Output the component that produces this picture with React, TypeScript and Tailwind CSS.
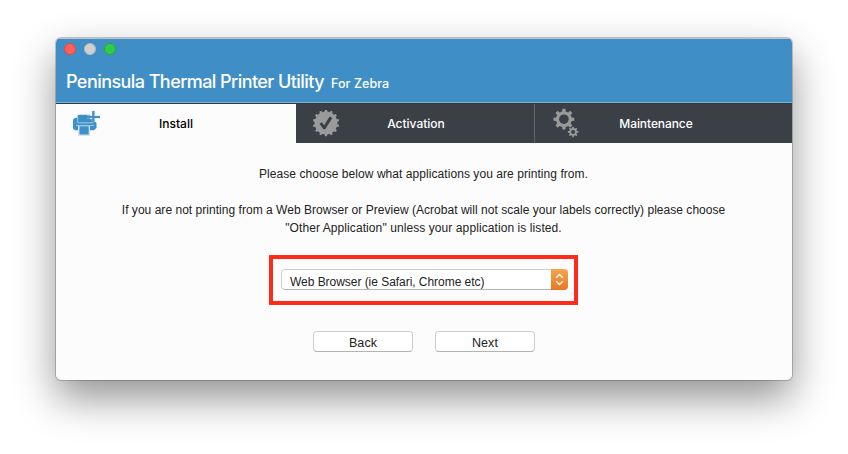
import React from 'react';

const PrinterIcon = () => (
  <svg className="block" width="28" height="28" viewBox="0 0 28 28">
    <path d="M5.500 5.500L7 4.700H18V9H21V12H23.500L24.500 13V18L22 20.300H3L1 18.500V9.500L3 8L5.500 7.500Z" fill="#3f90c8" />
    <path d="M5.700 6V12.800H21.500M4 15.500H22" fill="none" stroke="#b5d6eb" strokeWidth="0.800" />
    <path d="M6 16H18V26H6Z" fill="#cfe3f1" />
    <path d="M7.500 16.200H16.700V24.500H7.500Z" fill="#3f90c8" />
    <path d="M15 5H28V8.800H15ZM19.500 0.500H23.500V12H19.500Z" fill="#cfe3f1" opacity="0.450" />
    <path d="M15 6H28V8H15ZM20.200 1H22.500V12H20.200Z" fill="#3f90c8" />
  </svg>
);

const teeth = (cx: number, cy: number, count: number, inner: number, outer: number, spread: number) =>
  Array.from({ length: count }, (_, i) => {
    const step = (Math.PI * 2) / count;
    const a = i * step - Math.PI / 2;
    return [
      [inner, -spread * 1.5],
      [outer, -spread],
      [outer, spread],
      [inner, spread * 1.5],
    ]
      .map(([r, d]) => `${(cx + r * Math.cos(a + step * d)).toFixed(2)},${(cy + r * Math.sin(a + step * d)).toFixed(2)}`)
      .join(' ');
  }).join(' ');

const BadgeIcon = () => (
  <svg className="block" width="28" height="28" viewBox="0 0 28 28">
    <polygon points={teeth(14, 13, 14, 11.5, 13.2, 0.17)} fill="#9a9a9a" />
    <path d="M7.500 13.800L9.800 12.300L12.200 15.200L17.600 6.500L20.300 7.900L13.200 19.300H11.400Z" fill="#3b4047" />
  </svg>
);

const GearsIcon = () => (
  <svg className="block overflow-visible" width="28" height="30" viewBox="0 0 28 30">
    <polygon points={teeth(12.9, 9.2, 8, 8, 10.5, 0.19)} fill="#999" />
    <circle cx="12.900" cy="9.200" r="4.800" fill="#3b4047" />
    <polygon points={teeth(22.1, 21.9, 8, 3.9, 5.3, 0.19)} fill="#999" />
    <circle cx="22.100" cy="21.900" r="2" fill="#3b4047" />
  </svg>
);

const Tab = ({ icon, label, className }: { icon: React.ReactNode; label: string; className: string }) => (
  <div className={`relative flex h-full items-center justify-center text-[12px] font-medium ${className}`}>
    <span className="absolute left-4 top-[6px]">{icon}</span>
    <span className="pt-px">{label}</span>
  </div>
);

const Button = ({ children }: { children: React.ReactNode }) => (
  <button className="flex h-[21px] w-[100px] items-center justify-center rounded-[4px] border border-[#cfcfcf] border-b-[#b3b3b3] bg-white pt-[4px] text-[12.500px] leading-none tracking-[0.100px]">
    {children}
  </button>
);

export default function App() {
  return (
    <div className="h-[454px] w-[848px] overflow-hidden bg-white px-[56px] pt-[38px] font-['Liberation_Sans',Arial,sans-serif] text-[#222]">
      <div className="flex h-[342px] w-[736px] flex-col overflow-hidden rounded-[5px] bg-[#fcfcfc] shadow-[0_0_0_1px_rgba(0,0,0,0.2),0_18px_40px_rgba(0,0,0,0.43)]">
        <header className="h-[65px] border-t border-b border-t-[#b5c4cf] border-b-[#75b2dc] bg-[#3f8fc6] font-['Inter',sans-serif] text-white">
          <div className="flex gap-2 pl-2 pt-1">
            <span className="size-3 rounded-full border border-[#e2463f] bg-[#ff605a]" />
            <span className="size-3 rounded-full border border-[#b9b9b9] bg-[#d0d0d0]" />
            <span className="size-3 rounded-full border border-[#1ead32] bg-[#2fcb4a]" />
          </div>
          <div className="flex items-baseline gap-[7px] whitespace-nowrap pl-[10px] pt-[14px]">
            <h1 className="text-[18px] font-medium leading-[26px] tracking-[-0.560px]">Peninsula Thermal Printer Utility</h1>
            <span className="text-[12.500px] font-medium tracking-[0.080px]">For Zebra</span>
          </div>
        </header>
        <nav className="grid h-10 grid-cols-[240px_239px_257px] border-t border-[#34393f] bg-[#3b4047] font-['Inter',sans-serif] text-white">
          <Tab icon={<PrinterIcon />} label="Install" className="bg-[#fcfcfc] text-black" />
          <Tab icon={<BadgeIcon />} label="Activation" className="border-r border-[#62666c] pl-[2px]" />
          <Tab icon={<GearsIcon />} label="Maintenance" className="pr-[15px] tracking-[-0.080px]" />
        </nav>
        <main className="flex flex-col items-center">
          <div className="w-full whitespace-nowrap pt-[22px] pr-px text-center text-[12px] leading-[18px]">
            <p className="tracking-[0.060px]">Please choose below what applications you are printing from.</p>
            <p className="pt-[18px] tracking-[0.030px]">If you are not printing from a Web Browser or Preview (Acrobat will not scale your labels correctly) please choose</p>
            <p className="tracking-[0.085px]">"Other Application" unless your application is listed.</p>
          </div>
          <div className="mr-[1px] mt-[18px] flex h-[50px] w-[309px] border-4 border-[#ff2a17] pl-2 pt-[10px]">
            <div className="flex h-[21px] w-[287px] overflow-hidden rounded-[4px] text-[12px]">
              <div className="flex-1 whitespace-nowrap rounded-l-[4px] border border-r-0 border-[#cfcfcf] border-b-[#b3b3b3] bg-white pl-2 leading-[24px] tracking-[-0.040px]">
                Web Browser (ie Safari, Chrome etc)
              </div>
              <div className="flex w-[17px] items-center justify-center bg-linear-to-b from-[#f2a64b] to-[#ea7625]">
                <svg width="9" height="13" viewBox="0 0 9 13" fill="none" stroke="#fff" strokeWidth="1.400">
                  <path d="M1.200 4.700L4.500 1.500L7.800 4.700M1.200 8.300L4.500 11.500L7.800 8.300" />
                </svg>
              </div>
            </div>
          </div>
          <div className="mt-[26px] flex gap-[22px]">
            <Button>Back</Button>
            <Button>Next</Button>
          </div>
        </main>
      </div>
    </div>
  );
}
